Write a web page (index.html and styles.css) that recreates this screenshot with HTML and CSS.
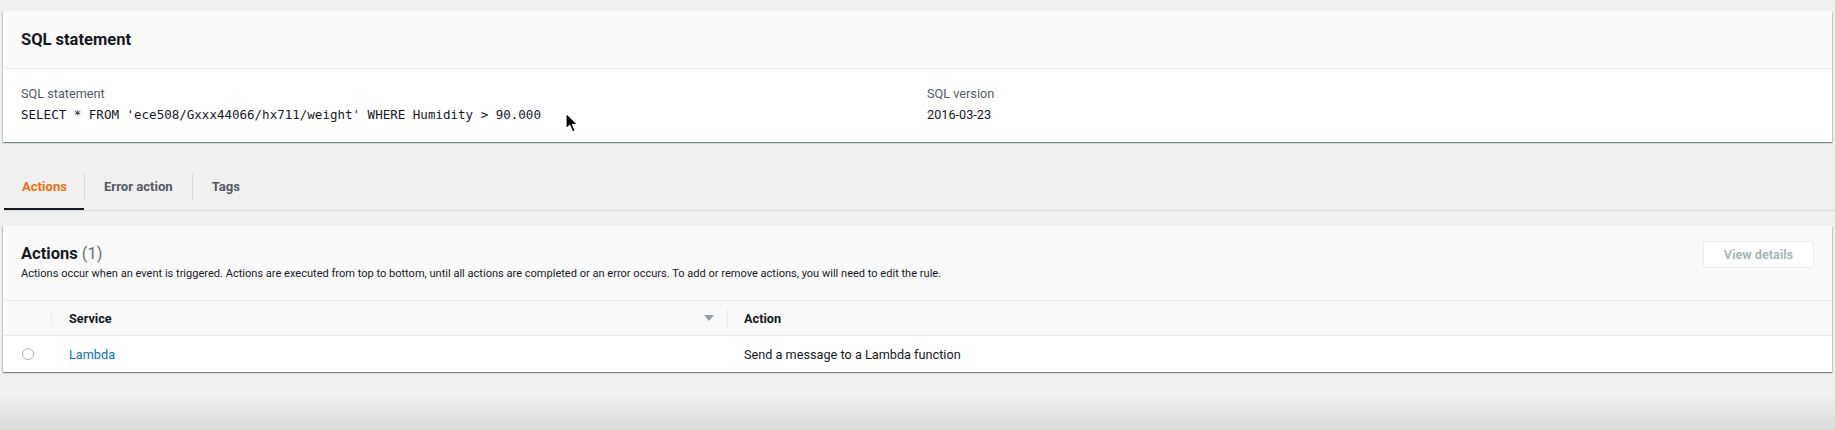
FILE: index.html
```html
<!DOCTYPE html>
<html lang="en">
<head>
<meta charset="utf-8">
<title>Rule</title>
<link rel="stylesheet" href="styles.css">
</head>
<body>
<main class="page">
  <section class="card">
    <header class="card-header">
      <h2 class="card-title">SQL statement</h2>
    </header>
    <div class="card-body kv-grid">
      <div class="kv">
        <div class="kv-label">SQL statement</div>
        <div class="kv-value mono">SELECT * FROM 'ece508/Gxxx44066/hx711/weight' WHERE Humidity &gt; 90.000</div>
      </div>
      <div class="kv">
        <div class="kv-label">SQL version</div>
        <div class="kv-value">2016-03-23</div>
      </div>
    </div>
  </section>

  <nav class="tabs">
    <a class="tab active">Actions</a>
    <span class="tab-sep"></span>
    <a class="tab">Error action</a>
    <span class="tab-sep"></span>
    <a class="tab">Tags</a>
  </nav>

  <section class="card">
    <header class="card-header actions-header">
      <div class="actions-text">
        <h2 class="actions-title">Actions <span class="count">(1)</span></h2>
        <p class="desc">Actions occur when an event is triggered. Actions are executed from top to bottom, until all actions are completed or an error occurs. To add or remove actions, you will need to edit the rule.</p>
      </div>
      <button class="btn" disabled>View details</button>
    </header>
    <div class="table">
      <div class="trow thead">
        <div class="cell c-sel"></div>
        <div class="cell c-service"><span>Service</span><span class="caret"></span></div>
        <div class="cell c-action">Action</div>
      </div>
      <div class="trow tbody">
        <div class="cell c-sel"><span class="radio"></span></div>
        <div class="cell c-service"><a class="link">Lambda</a></div>
        <div class="cell c-action">Send a message to a Lambda function</div>
      </div>
    </div>
  </section>
</main>
<svg class="cursor" width="14" height="22" viewBox="0 0 14 22" aria-hidden="true">
  <path d="M1 1 L1 17 L4.8 13.4 L7.6 20 L10.2 18.9 L7.5 12.5 L12.6 12.5 Z" fill="#000" stroke="#fff" stroke-width="1.2" stroke-linejoin="round"/>
</svg>
</body>
</html>
```
FILE: styles.css
```css
html, body {
  margin: 0;
  padding: 0;
}
body {
  width: 1835px;
  height: 430px;
  overflow: hidden;
  position: relative;
  font-family: Roboto, "Liberation Sans", Arial, sans-serif;
  font-size: 12.7px;
  color: #16191f;
  background: linear-gradient(to bottom, #f0f0f0 0, #f0f0f0 395px, #dadada 430px);
}
.page {
  padding: 11px 3px 0 3px;
}
.card {
  background: #fff;
  box-shadow: 0 1px 1px 0 rgba(0, 28, 36, 0.35), 1px 1px 1px 0 rgba(0, 28, 36, 0.12), -1px 1px 1px 0 rgba(0, 28, 36, 0.12);
}
.card-header {
  background: #fafafa;
  border-bottom: 1px solid #eaeded;
  box-sizing: border-box;
}
.card-title {
  margin: 0;
  height: 57px;
  line-height: 57px;
  padding-left: 18px;
  font-size: 16.5px;
  font-weight: 700;
  color: #16191f;
}
.kv-grid {
  display: grid;
  grid-template-columns: 1fr 1fr;
  column-gap: 19px;
  padding: 16px 18px 16px 18px;
  height: 41px;
}
.kv-label {
  color: #545b64;
  font-size: 12.7px;
  line-height: 17px;
}
.kv-value {
  margin-top: 4px;
  line-height: 18px;
  color: #16191f;
}
.mono {
  font-family: "DejaVu Sans Mono", "Liberation Mono", monospace;
  font-size: 12.52px;
}
.tabs {
  display: flex;
  align-items: center;
  margin-top: 20px;
  height: 48px;
  border-bottom: 1px solid #d5dbdb;
  margin-bottom: 15px;
  margin-left: 1px;
  margin-right: -3px;
}
.tab {
  display: flex;
  align-items: center;
  height: 100%;
  box-sizing: border-box;
  padding: 0 19px 0 19px;
  font-weight: 700;
  font-size: 13.1px;
  color: #545b64;
  cursor: pointer;
}
.tab:first-child {
  padding-left: 18px;
  padding-right: 17px;
}
.tab.active {
  color: #ec7211;
  box-shadow: inset 0 -2px 0 #16191f;
}
.tab-sep {
  width: 1px;
  height: 27px;
  background: #d5dbdb;
}
.actions-header {
  display: flex;
  justify-content: space-between;
  align-items: flex-start;
  height: 75px;
  padding: 15px 18px 0 18px;
}
.actions-title {
  margin: 0;
  font-size: 16.5px;
  font-weight: 700;
  line-height: 22px;
  margin-top: 2px;
}
.count {
  font-weight: 400;
  color: #687078;
}
.desc {
  margin: 1px 0 0 0;
  font-size: 11.05px;
  line-height: 15px;
  color: #16191f;
}
.btn {
  width: 111px;
  height: 27px;
  box-sizing: border-box;
  background: #fff;
  border: 1px solid #eaeded;
  border-radius: 2px;
  color: #aab7b8;
  font-family: inherit;
  font-size: 12.7px;
  font-weight: 700;
  padding: 0;
}
.trow {
  display: grid;
  grid-template-columns: 48px 676px 1fr;
  align-items: center;
}
.thead {
  height: 34px;
  background: #fafafa;
  border-bottom: 1px solid #eaeded;
  font-weight: 700;
  color: #16191f;
}
.tbody {
  height: 36px;
}
.cell {
  box-sizing: border-box;
  height: 100%;
  display: flex;
  align-items: center;
}
.c-service {
  padding-left: 18px;
  justify-content: space-between;
  padding-right: 13px;
}
.thead .c-service,
.thead .c-action {
  position: relative;
}
.thead .c-service::before {
  content: "";
  position: absolute;
  left: 0;
  top: 10px;
  height: 15px;
  width: 1px;
  background: #eaeded;
}
.thead .c-action::before {
  content: "";
  position: absolute;
  left: 0;
  top: 8px;
  height: 19px;
  width: 1px;
  background: #eaeded;
}
.c-action {
  padding-left: 17px;
}
.caret {
  width: 0;
  height: 0;
  border-left: 5px solid transparent;
  border-right: 5px solid transparent;
  border-top: 6px solid #95a0a4;
}
.c-sel {
  justify-content: center;
}
.radio {
  width: 12px;
  height: 12px;
  border: 1px solid #aab7b8;
  border-radius: 50%;
  box-sizing: border-box;
  background: #fff;
  margin-left: 1px;
}
.link {
  color: #0073bb;
  text-decoration: none;
}
.cursor {
  position: absolute;
  left: 565px;
  top: 112px;
}
```
